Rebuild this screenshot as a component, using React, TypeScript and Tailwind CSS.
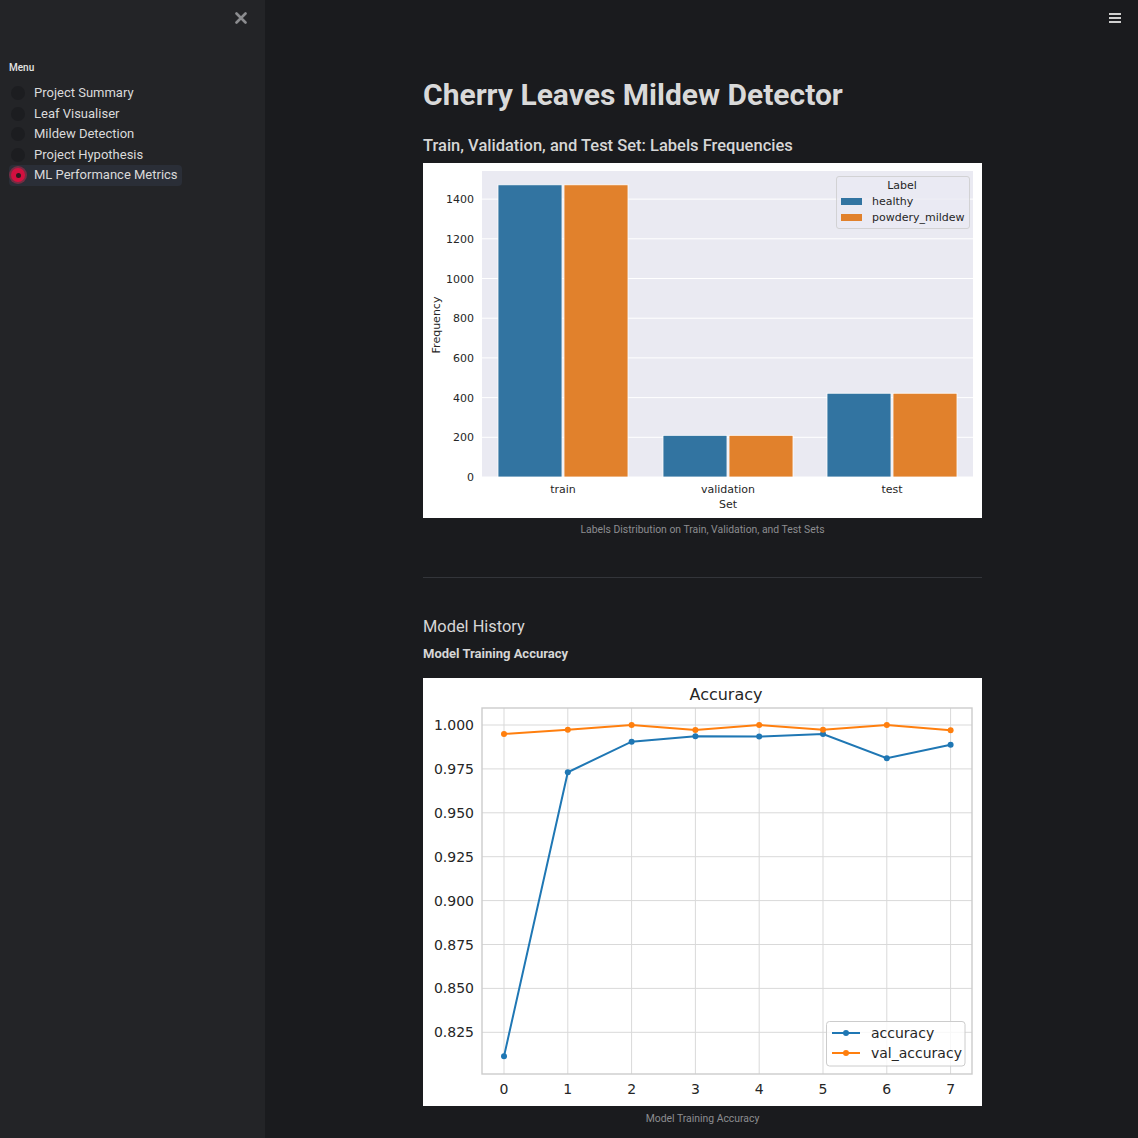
import React from "react";

const BLUE = "#3274a1";
const ORANGE = "#e1812c";

function LabelsChart() {
  const y = (v: number) => 314 - v * 0.1985;
  const ticks = [0, 200, 400, 600, 800, 1000, 1200, 1400];
  const groups = [
    { name: "train", c: 140, h: 1472, p: 1472 },
    { name: "validation", c: 305, h: 210, p: 210 },
    { name: "test", c: 469, h: 422, p: 422 },
  ];
  return (
    <svg width="559" height="355" viewBox="0 0 559 355" fontFamily="'DejaVu Sans', sans-serif" className="block">
      <rect x="0" y="0" width="559" height="355" fill="#ffffff" />
      <rect x="59" y="8" width="491" height="306" fill="#eaeaf2" />
      {ticks.map((t) => (
        <g key={t}>
          <line x1="59" x2="550" y1={y(t)} y2={y(t)} stroke="#ffffff" strokeWidth="1" />
          <text x="51" y={y(t) + 4} textAnchor="end" fontSize="11" fill="#262626">
            {t}
          </text>
        </g>
      ))}
      {groups.map((g) => (
        <g key={g.name}>
          <rect x={g.c - 65} y={y(g.h)} width="64" height={314 - y(g.h)} fill={BLUE} stroke="#ffffff" strokeWidth="0.8" />
          <rect x={g.c + 1} y={y(g.p)} width="64" height={314 - y(g.p)} fill={ORANGE} stroke="#ffffff" strokeWidth="0.8" />
          <text x={g.c} y="330" textAnchor="middle" fontSize="11" fill="#262626">
            {g.name}
          </text>
        </g>
      ))}
      <text x="305" y="345" textAnchor="middle" fontSize="11" fill="#262626">
        Set
      </text>
      <text x="17" y="162" textAnchor="middle" fontSize="11" fill="#262626" transform="rotate(-90 17 162)">
        Frequency
      </text>
      <rect x="413.5" y="13.5" width="133" height="52" rx="2.5" fill="#eaeaf2" fillOpacity="0.8" stroke="#cccccc" strokeWidth="0.8" />
      <text x="479" y="26" textAnchor="middle" fontSize="11" fill="#262626">
        Label
      </text>
      <rect x="418" y="35" width="21" height="7" fill={BLUE} />
      <text x="449" y="42" fontSize="11" fill="#262626">
        healthy
      </text>
      <rect x="418" y="51" width="21" height="7" fill={ORANGE} />
      <text x="449" y="58" fontSize="11" fill="#262626">
        powdery_mildew
      </text>
    </svg>
  );
}

function AccuracyChart() {
  const x = (i: number) => 81 + 63.8 * i;
  const y = (v: number) => 47 + (1 - v) * 1756;
  const yTicks = [1.0, 0.975, 0.95, 0.925, 0.9, 0.875, 0.85, 0.825];
  const acc = [0.8113, 0.9731, 0.9905, 0.9936, 0.9934, 0.9949, 0.9811, 0.9888];
  const val = [0.9949, 0.9973, 1.0, 0.9972, 1.0, 0.9973, 1.0, 0.997];
  const pts = (arr: number[]) => arr.map((v, i) => `${x(i)},${y(v)}`).join(" ");
  return (
    <svg width="559" height="428" viewBox="0 0 559 428" fontFamily="'DejaVu Sans', sans-serif" className="block">
      <rect x="0" y="0" width="559" height="428" fill="#ffffff" />
      <text x="303" y="22" textAnchor="middle" fontSize="16" fill="#262626">
        Accuracy
      </text>
      {yTicks.map((t) => (
        <g key={t}>
          <line x1="59" x2="549" y1={y(t)} y2={y(t)} stroke="#d9d9d9" strokeWidth="1" />
          <text x="51" y={y(t) + 5} textAnchor="end" fontSize="14" fill="#262626">
            {t.toFixed(3)}
          </text>
        </g>
      ))}
      {[0, 1, 2, 3, 4, 5, 6, 7].map((i) => (
        <g key={i}>
          <line x1={x(i)} x2={x(i)} y1="30" y2="396" stroke="#d9d9d9" strokeWidth="1" />
          <text x={x(i)} y="416" textAnchor="middle" fontSize="14" fill="#262626">
            {i}
          </text>
        </g>
      ))}
      <rect x="59" y="30" width="490" height="366" fill="none" stroke="#cccccc" strokeWidth="1.4" />
      <polyline points={pts(acc)} fill="none" stroke="#1f77b4" strokeWidth="2" />
      {acc.map((v, i) => (
        <circle key={i} cx={x(i)} cy={y(v)} r="3" fill="#1f77b4" />
      ))}
      <polyline points={pts(val)} fill="none" stroke="#ff7f0e" strokeWidth="2" />
      {val.map((v, i) => (
        <circle key={i} cx={x(i)} cy={y(v)} r="3" fill="#ff7f0e" />
      ))}
      <rect x="403.5" y="343.5" width="138.5" height="44.5" rx="3" fill="#ffffff" fillOpacity="0.8" stroke="#cccccc" strokeWidth="1" />
      <line x1="409" x2="437" y1="355" y2="355" stroke="#1f77b4" strokeWidth="2" />
      <circle cx="423" cy="355" r="3" fill="#1f77b4" />
      <text x="448" y="360" fontSize="14" fill="#262626">
        accuracy
      </text>
      <line x1="409" x2="437" y1="375" y2="375" stroke="#ff7f0e" strokeWidth="2" />
      <circle cx="423" cy="375" r="3" fill="#ff7f0e" />
      <text x="448" y="380" fontSize="14" fill="#262626">
        val_accuracy
      </text>
    </svg>
  );
}

const menu = [
  "Project Summary",
  "Leaf Visualiser",
  "Mildew Detection",
  "Project Hypothesis",
  "ML Performance Metrics",
];

export default function App() {
  return (
    <div className="flex min-h-[1138px] w-full bg-[#1a1b1e] font-['Roboto',sans-serif]">
      <aside className="w-[265px] shrink-0 bg-[#232427]">
        <div className="flex h-[36px] items-center justify-end pr-[18px]">
          <svg width="12" height="12" viewBox="0 0 12 12">
            <path d="M1.5 1.5 L10.5 10.5 M10.5 1.5 L1.5 10.5" stroke="#8b8c8f" strokeWidth="2.6" strokeLinecap="round" />
          </svg>
        </div>
        <div className="px-[9px] pt-[25px]">
          <div className="text-[10px] font-medium leading-[14px] text-[#e3e3e3]">Menu</div>
          <div className="mt-[8px] flex flex-col items-start">
            {menu.map((m, i) => {
              const sel = i === menu.length - 1;
              return (
                <div
                  key={m}
                  className={
                    sel
                      ? "flex h-[20.5px] items-center gap-[9px] whitespace-nowrap rounded-[4px] bg-[#2a2e37] pl-[2px] pr-[4px]"
                      : "flex h-[20.5px] items-center gap-[9px] whitespace-nowrap pl-[2px] pr-[4px]"
                  }
                >
                  {sel ? (
                    <span className="flex h-[14px] w-[14px] items-center justify-center rounded-full bg-[#d2103f] shadow-[0_0_0_2px_rgba(255,43,91,0.35)]">
                      <span className="h-[5px] w-[5px] rounded-full bg-[#2b1a1e]" />
                    </span>
                  ) : (
                    <span className="h-[14px] w-[14px] rounded-full bg-[#1c1d20]" />
                  )}
                  <span className="text-[13px] leading-[18px] text-[#dadada]">{m}</span>
                </div>
              );
            })}
          </div>
        </div>
      </aside>
      <main className="flex min-w-0 flex-1 flex-col pl-[2px]">
        <div className="flex h-[36px] items-center justify-end pr-[17px]">
          <div className="flex w-[12px] flex-col gap-[2.5px]">
            <span className="h-[1.5px] w-full bg-[#cfcfcf]" />
            <span className="h-[1.5px] w-full bg-[#cfcfcf]" />
            <span className="h-[1.5px] w-full bg-[#cfcfcf]" />
          </div>
        </div>
        <div className="mx-auto flex w-[559px] flex-col pt-[42px]">
          <h1 className="text-[30px] font-bold leading-[34px] text-[#d9d9d9]">Cherry Leaves Mildew Detector</h1>
          <h3 className="mt-[22px] text-[16.5px] font-medium leading-[24px] text-[#d6d6d6]">
            Train, Validation, and Test Set: Labels Frequencies
          </h3>
          <div className="mt-[5px]">
            <LabelsChart />
          </div>
          <p className="mt-[4px] text-center text-[10.4px] leading-[15px] text-[#8c8d90]">
            Labels Distribution on Train, Validation, and Test Sets
          </p>
          <hr className="mt-[40px] border-0 border-t border-[#33353a]" />
          <h3 className="mt-[37px] text-[16.4px] leading-[24px] text-[#d6d6d6]">Model History</h3>
          <p className="mt-[6px] text-[13px] font-bold leading-[18px] text-[#d6d6d6]">Model Training Accuracy</p>
          <div className="mt-[15px]">
            <AccuracyChart />
          </div>
          <p className="mt-[5px] text-center text-[10.4px] leading-[15px] text-[#8c8d90]">Model Training Accuracy</p>
        </div>
      </main>
    </div>
  );
}
